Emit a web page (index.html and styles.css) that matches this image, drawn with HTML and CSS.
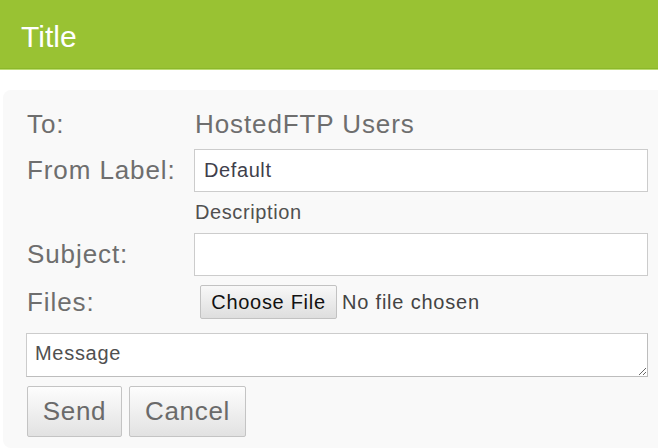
FILE: index.html
```html
<!DOCTYPE html>
<html lang="en">
<head>
  <meta charset="UTF-8" />
  <meta name="viewport" content="width=device-width, initial-scale=1.0" />
  <title>Title</title>
  <link rel="stylesheet" href="styles.css">
</head>
<body>
  <header class="topbar">
    <h1>Title</h1>
  </header>

  <form class="panel">
    <div class="row to-row">
      <span class="label">To:</span>
      <span class="value">HostedFTP Users</span>
    </div>

    <div class="row field-row">
      <label class="label" for="fromLabel">From Label:</label>
      <input type="text" id="fromLabel" class="text-input" value="Default">
    </div>

    <div class="row desc-row">
      <span class="label"></span>
      <span class="desc">Description</span>
    </div>

    <div class="row field-row">
      <label class="label" for="subject">Subject:</label>
      <input type="text" id="subject" class="text-input">
    </div>

    <div class="row files-row">
      <span class="label">Files:</span>
      <button type="button" class="file-btn">Choose File</button>
      <span class="file-status">No file chosen</span>
    </div>

    <textarea class="message">Message</textarea>

    <div class="actions">
      <button type="submit" class="btn send">Send</button>
      <button type="button" class="btn cancel">Cancel</button>
    </div>
  </form>
</body>
</html>
```

FILE: styles.css
```css
body {
  margin: 0;
  font-family: "Liberation Sans", Arial, sans-serif;
  background: #fff;
  color: #333;
  overflow: hidden;
}
.topbar {
  background: #99c233;
  height: 68px;
  border-bottom: 1px solid #8cb82b;
  box-shadow: 0 1px 0 #bcdc73;
  display: flex;
  align-items: center;
  padding-left: 21px;
}
.topbar h1 {
  margin: 0;
  font-size: 30px;
  font-weight: normal;
  color: #fff;
  padding-top: 5px;
}
.panel {
  margin: 21px 0 0 3px;
  padding: 19px 10px 0 23px;
  background: #f9f9f9;
  border-radius: 8px 0 0 8px;
  height: 358px;
  box-sizing: border-box;
}
.row {
  display: flex;
  align-items: center;
}
.label {
  flex: 0 0 168px;
  box-sizing: border-box;
  font-size: 26px;
  letter-spacing: 0.9px;
  color: #6e6e6e;
  padding-left: 1px;
}
.to-row {
  height: 30px;
}
.value {
  font-size: 26px;
  letter-spacing: 0.9px;
  color: #6e6e6e;
  padding-left: 1px;
}
.field-row {
  margin-top: 10px;
}
.text-input {
  flex: 1;
  height: 43px;
  box-sizing: border-box;
  border: 1px solid #ccc;
  background: #fff;
  padding: 0 9px;
  font-family: inherit;
  font-size: 20px;
  letter-spacing: 0.6px;
  color: #3f3f4c;
  outline: none;
}
.desc-row {
  margin-top: 9px;
  height: 22px;
}
.desc {
  font-size: 20px;
  letter-spacing: 0.6px;
  color: #505050;
  padding-left: 1px;
}
.files-row {
  margin-top: 9px;
  height: 34px;
}
.file-btn {
  margin-left: 6px;
  height: 34px;
  width: 137px;
  padding: 0;
  font-family: inherit;
  font-size: 20px;
  letter-spacing: 0.7px;
  color: #111;
  background: linear-gradient(#f8f8f8, #dedede);
  border: 1px solid #c2c2c2;
  border-radius: 2px;
}
.file-status {
  margin-left: 5px;
  font-size: 20px;
  letter-spacing: 0.8px;
  color: #444;
}
.message {
  display: block;
  margin-top: 14px;
  width: 100%;
  height: 44px;
  box-sizing: border-box;
  border: 1px solid #ccc;
  border-right-color: #bdbdbd;
  border-bottom-color: #bdbdbd;
  background: #fff;
  padding: 8px 8px;
  font-family: inherit;
  font-size: 20px;
  letter-spacing: 0.7px;
  line-height: 22px;
  color: #505050;
  overflow: hidden;
}
.actions {
  display: flex;
  gap: 7px;
  margin-top: 9px;
}
.btn {
  height: 51px;
  padding: 0;
  font-family: inherit;
  font-size: 26px;
  letter-spacing: 0.7px;
  color: #6a6a6a;
  background: linear-gradient(#fdfdfd, #e2e2e2);
  border: 1px solid #c4c4c4;
  border-radius: 2px;
  margin-left: 1px;
}
.send {
  width: 95px;
}
.cancel {
  width: 117px;
  margin-left: 0;
}
```
